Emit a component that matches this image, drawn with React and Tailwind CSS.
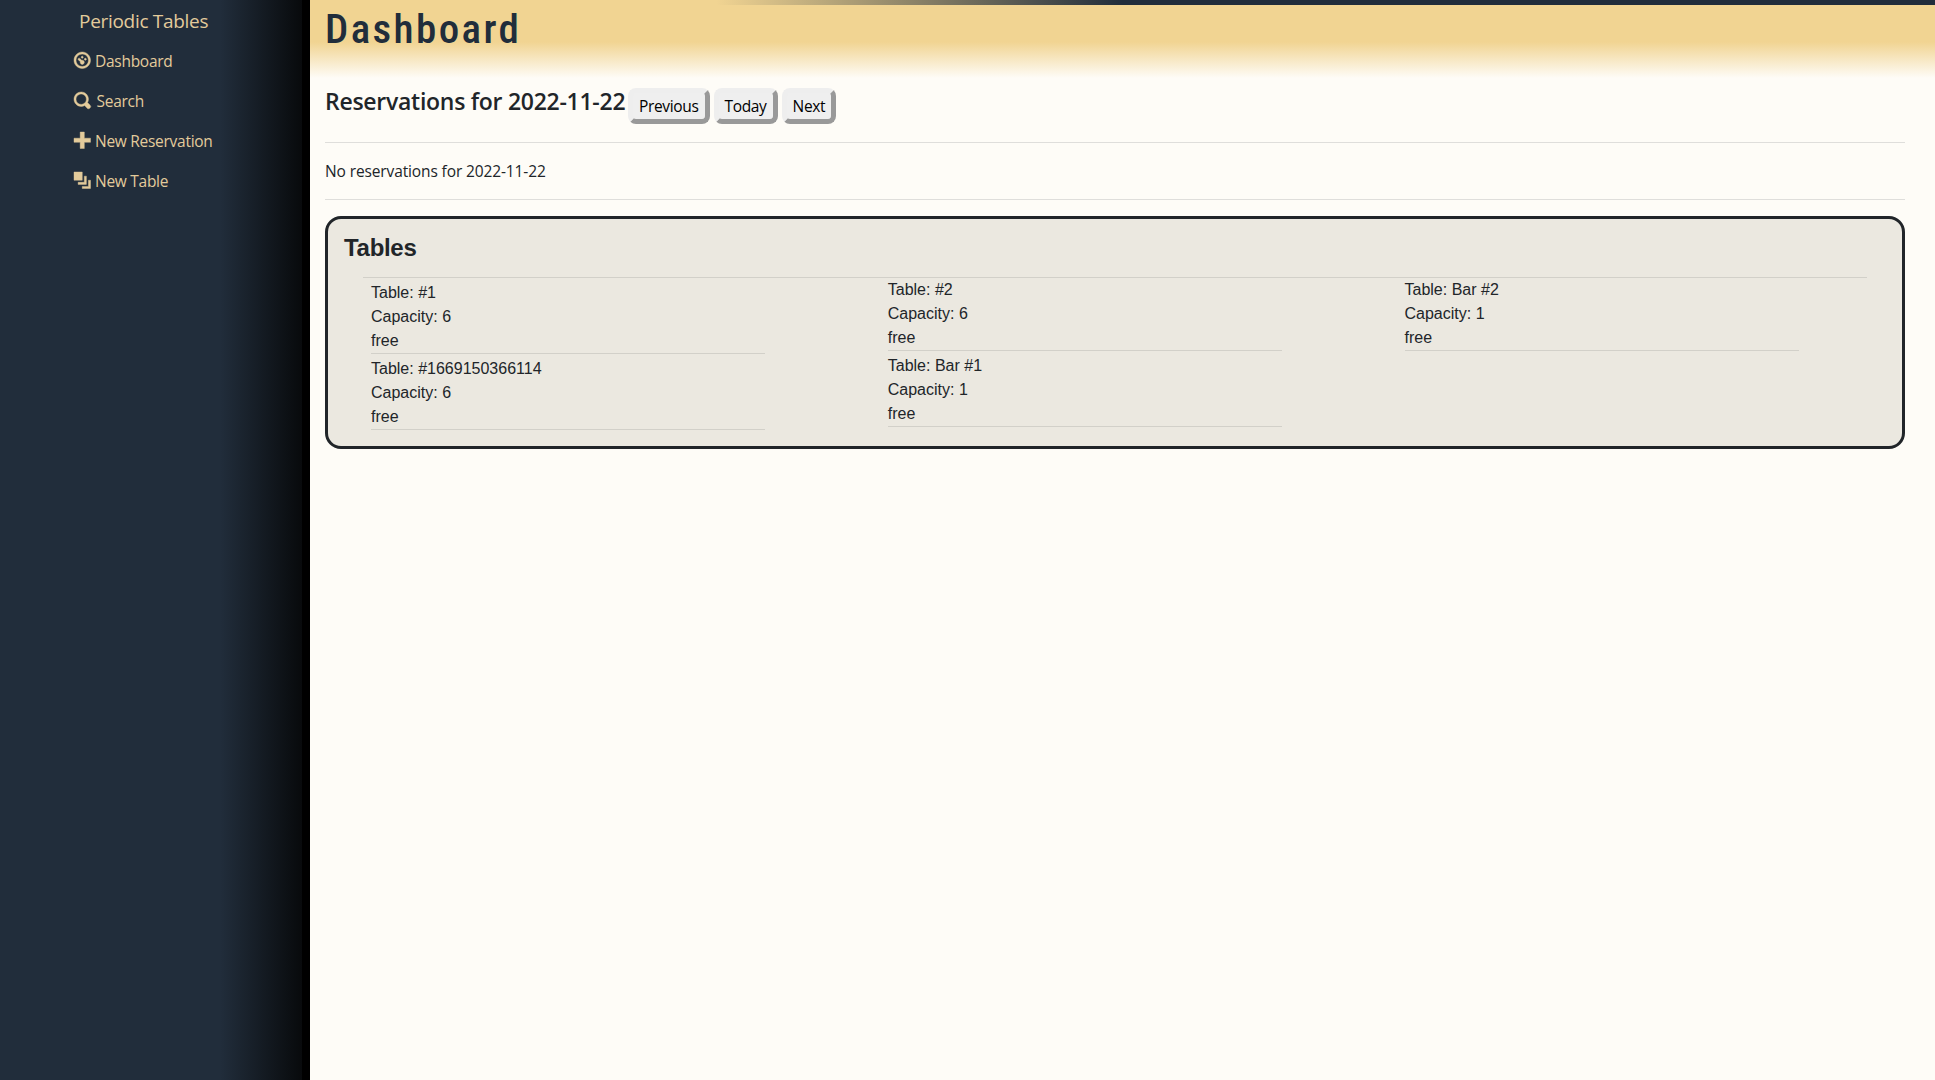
const ICONS = {
  dashboard:
    "M4 0c-2.2 0-4 1.8-4 4s1.8 4 4 4 4-1.8 4-4-1.8-4-4-4zm0 1c1.66 0 3 1.34 3 3s-1.34 3-3 3-3-1.34-3-3 1.34-3 3-3zm0 1c-.28 0-.5.22-.5.5s.22.5.5.5.5-.22.5-.5-.22-.5-.5-.5zm-1.66 1a.5.5 0 0 0-.19.84l.91.91c-.02.08-.06.16-.06.25 0 .55.45 1 1 1s1-.45 1-1-.45-1-1-1c-.09 0-.17.04-.25.06l-.91-.91a.5.5 0 0 0-.44-.16.5.5 0 0 0-.06 0zm3.16 0c-.28 0-.5.22-.5.5s.22.5.5.5.5-.22.5-.5-.22-.5-.5-.5z",
  search:
    "M3.5 0c-1.93 0-3.5 1.57-3.5 3.5s1.57 3.5 3.5 3.5c.59 0 1.17-.14 1.66-.41a1 1 0 0 0 .13.13l1 1a1.02 1.02 0 1 0 1.44-1.44l-1-1a1 1 0 0 0-.16-.13c.27-.49.44-1.06.44-1.66 0-1.93-1.55-3.5-3.5-3.5zm0 1c1.39 0 2.5 1.11 2.5 2.5 0 .66-.24 1.27-.66 1.72-.01.01-.02.02-.03.03a1 1 0 0 0-.13.13c-.44.4-1.04.63-1.69.63-1.39 0-2.5-1.11-2.5-2.5s1.11-2.5 2.5-2.5z",
  plus: "M3 0v3h-3v2h3v3h2v-3h3v-2h-3v-3z",
  layers: "M0 0v4h4v-4h-4zm5 2v3h-3v1h4v-4h-1zm2 2v3h-3v1h4v-4h-1z",
};

const NAV = [
  { icon: "dashboard", label: "Dashboard" },
  { icon: "search", label: "Search" },
  { icon: "plus", label: "New Reservation" },
  { icon: "layers", label: "New Table" },
];

const COLUMNS = [
  [["#1", 6], ["#1669150366114", 6]],
  [["#2", 6], ["Bar #1", 1]],
  [["Bar #2", 1]],
];

function Sidebar() {
  return (
    <aside className="w-[310px] shrink-0 border-r-8 border-black bg-[linear-gradient(to_right,#212d3b_73%,#080a0c)] pl-[74px] text-[#e3cb9b]">
      <div className="flex h-10 items-center pl-[5px] pt-[2px] text-[19px] tracking-[-0.3px]">Periodic Tables</div>
      <nav>
        {NAV.map(({ icon, label }) => (
          <a
            key={label}
            className={icon === "search" ? "flex h-10 items-center gap-[6px]" : "flex h-10 items-center gap-[4.5px]"}
          >
            <svg
              viewBox="0 0 8 8"
              className="size-[16.5px] overflow-visible fill-current stroke-current"
              strokeWidth="0.2"
              aria-hidden="true"
            >
              <path d={ICONS[icon]} />
            </svg>
            <span className="pt-[3px] text-[15.5px] tracking-[-0.28px]">{label}</span>
          </a>
        ))}
      </nav>
    </aside>
  );
}

function Tables() {
  return (
    <section className="mt-4 h-[233px] rounded-2xl border-[3px] border-[#212529] bg-[#ebe8e0] font-['Liberation_Sans',sans-serif]">
      <h4 className="h-[58px] pl-4 pt-[15px] text-2xl font-bold leading-7 tracking-[-0.3px]">Tables</h4>
      <div className="mx-[35px] border-t border-[#d2d0c9] pl-2">
        <div className="flex gap-[122.75px]">
          {COLUMNS.map((col, i) => (
            <div key={i} className={i === 0 ? "w-[394px] pt-[3px]" : "w-[394px]"}>
              {col.map(([name, capacity]) => (
                <div key={name} className="mb-[3px] border-b border-[#d2d0c9] leading-6">
                  <p>Table: {name}</p>
                  <p>Capacity: {capacity}</p>
                  <p>free</p>
                </div>
              ))}
            </div>
          ))}
        </div>
      </div>
    </section>
  );
}

export default function App() {
  return (
    <div className="flex h-[1080px] w-full overflow-hidden bg-[#fefcf7] font-['Open_Sans',sans-serif] text-[#212529]">
      <Sidebar />
      <main className="min-w-0 flex-1">
        <header className="h-[78px] bg-[linear-gradient(to_bottom,#f1d492_42px,#fefcf7)]">
          <div className="h-[5px] bg-[linear-gradient(to_right,transparent_25%,#212d3b_50%)]" />
          <h1 className="pl-[15px] font-['Roboto',sans-serif] text-[41px] font-medium leading-[49px] tracking-[2.4px] text-[#212d3b] [font-stretch:75%]">
            Dashboard
          </h1>
        </header>
        <div className="pl-[15px] pr-[30px]">
          <div className="flex h-[64px] items-start pt-[10px]">
            <h4 className="w-[303px] whitespace-nowrap pt-px text-[23px] font-semibold leading-6 tracking-[-0.27px]">
              Reservations for 2022-11-22
            </h4>
            <div className="flex gap-1">
              {["Previous", "Today", "Next"].map((label) => (
                <button
                  key={label}
                  className="h-9 rounded-lg border-[5px] border-b-[#999] border-l-[#eee] border-r-[#999] border-t-[#eee] bg-[#efefef] px-1.5 text-[15.5px] leading-6 tracking-[-0.34px] text-black"
                >
                  {label}
                </button>
              ))}
            </div>
          </div>
          <hr className="border-[#dfdedb]" />
          <p className="h-14 pt-4 text-[15.5px] leading-6 tracking-[-0.12px]">No reservations for 2022-11-22</p>
          <hr className="border-[#dfdedb]" />
          <Tables />
        </div>
      </main>
    </div>
  );
}
